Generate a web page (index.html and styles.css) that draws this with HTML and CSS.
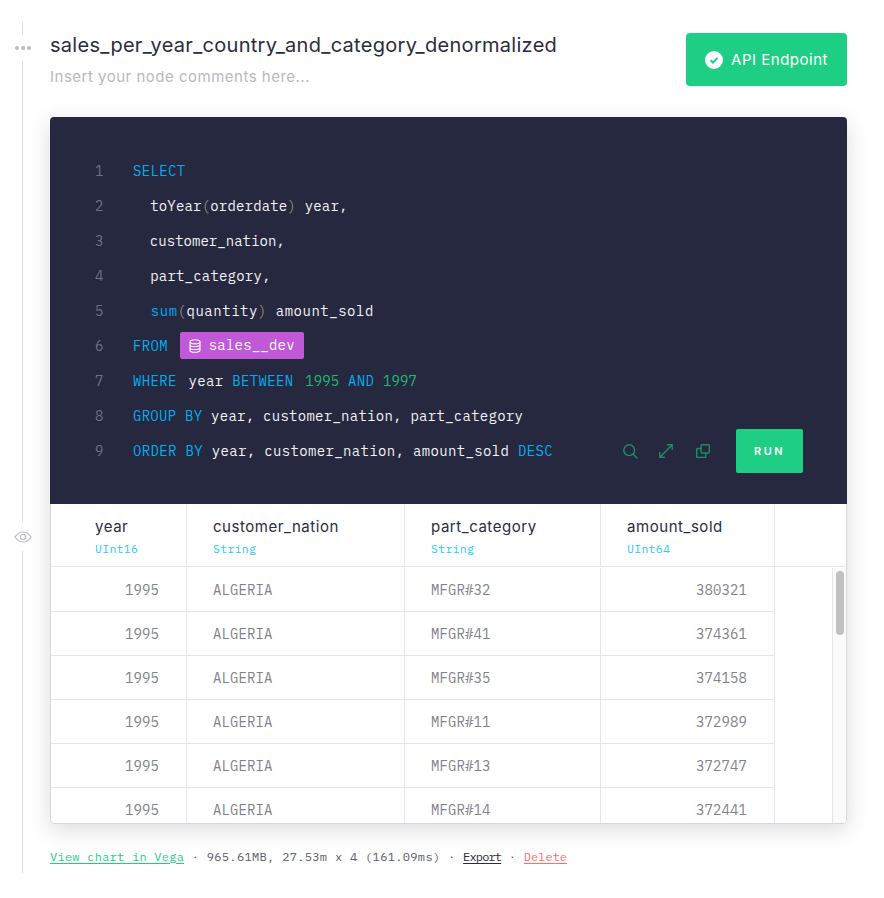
FILE: index.html
```html
<!DOCTYPE html>
<html lang="en">
<head>
<meta charset="utf-8">
<title>sales_per_year_country_and_category_denormalized</title>
<link rel="stylesheet" href="styles.css">
</head>
<body>
<div class="page">
  <div class="rail">
    <span class="seg seg-top"></span>
    <svg class="rail-dots" width="18" height="6" viewBox="0 0 18 6"><circle cx="3" cy="3" r="2"/><circle cx="9" cy="3" r="2"/><circle cx="15" cy="3" r="2"/></svg>
    <span class="seg seg-mid"></span>
    <svg class="rail-eye" width="18" height="12" viewBox="0 0 18 12"><path d="M1 6c2-3 5-5 8-5s6 2 8 5c-2 3-5 5-8 5S3 9 1 6z"/><circle cx="9" cy="6" r="2.6"/></svg>
    <span class="seg seg-bot"></span>
  </div>
  <main class="node">
    <header class="node-head">
      <div class="node-titles">
        <h1 class="node-title">sales_per_year_country_and_category_denormalized</h1>
        <p class="node-comment">Insert your node comments here...</p>
      </div>
      <button class="api-btn">
        <svg width="18" height="18" viewBox="0 0 18 18"><circle cx="9" cy="9" r="9" fill="#fff"/><path d="M5.5 9.2l2.4 2.3 4.6-4.6" fill="none" stroke="#1fce85" stroke-width="2"/></svg>
        <span>API Endpoint</span>
      </button>
    </header>

    <section class="card">
      <div class="editor">
        <div class="line"><span class="no">1</span><span class="kw">SELECT</span></div>
        <div class="line l2"><span class="no">2</span>  toYear<span class="par">(</span>orderdate<span class="par">)</span> year,</div>
        <div class="line l3"><span class="no">3</span>  customer_nation,</div>
        <div class="line l4"><span class="no">4</span>  part_category,</div>
        <div class="line l5"><span class="no">5</span>  <span class="kw">sum</span><span class="par">(</span>quantity<span class="par">)</span> amount_sold</div>
        <div class="line"><span class="no">6</span><span class="kw">FROM</span> <span class="ds"><svg width="12" height="14" viewBox="0 0 12 14" fill="none" stroke="#fff" stroke-width="1.1"><ellipse cx="6" cy="2.8" rx="5" ry="2.1"/><path d="M1 2.8v8.4c0 1.2 2.2 2.1 5 2.1s5-.9 5-2.1V2.8M1 5.6c0 1.2 2.2 2.1 5 2.1s5-.9 5-2.1M1 8.4c0 1.2 2.2 2.1 5 2.1s5-.9 5-2.1"/></svg>sales__dev</span></div>
        <div class="line"><span class="no">7</span><span class="kw gap">WHERE</span> year <span class="kw gap">BETWEEN</span> <span class="num">1995</span> <span class="kw">AND</span> <span class="num">1997</span></div>
        <div class="line l8"><span class="no">8</span><span class="kw">GROUP</span> <span class="kw">BY</span> year, customer_nation, part_category</div>
        <div class="line"><span class="no">9</span><span class="kw">ORDER</span> <span class="kw">BY</span> year, customer_nation, amount_sold <span class="kw">DESC</span></div>
        <div class="tools">
          <svg class="tool t-search" width="15" height="15" viewBox="0 0 15 15"><circle cx="6.2" cy="6.2" r="5.4"/><path d="M10 10l4.4 4.5"/></svg>
          <svg class="tool t-expand" width="14" height="14" viewBox="0 0 14 14"><path d="M.8 13.2L13.2.8M8 .8h5.2V6M.8 8v5.2H6"/></svg>
          <svg class="tool t-copy" width="14" height="14" viewBox="0 0 14 14"><rect x="5" y=".7" width="8.3" height="8.3" rx="1"/><path d="M5 4.5H1.7a1 1 0 0 0-1 1v7a1 1 0 0 0 1 1h7a1 1 0 0 0 1-1V9"/></svg>
          <button class="run">RUN</button>
        </div>
      </div>

      <div class="table">
        <div class="row head">
          <div class="cell"><span class="name">year</span><span class="type">UInt16</span></div>
          <div class="cell"><span class="name">customer_nation</span><span class="type">String</span></div>
          <div class="cell"><span class="name">part_category</span><span class="type">String</span></div>
          <div class="cell"><span class="name">amount_sold</span><span class="type">UInt64</span></div>
        </div>
        <div class="body">
          <div class="row"><div class="cell r">1995</div><div class="cell">ALGERIA</div><div class="cell">MFGR#32</div><div class="cell r">380321</div></div>
          <div class="row"><div class="cell r">1995</div><div class="cell">ALGERIA</div><div class="cell">MFGR#41</div><div class="cell r">374361</div></div>
          <div class="row"><div class="cell r">1995</div><div class="cell">ALGERIA</div><div class="cell">MFGR#35</div><div class="cell r">374158</div></div>
          <div class="row"><div class="cell r">1995</div><div class="cell">ALGERIA</div><div class="cell">MFGR#11</div><div class="cell r">372989</div></div>
          <div class="row"><div class="cell r">1995</div><div class="cell">ALGERIA</div><div class="cell">MFGR#13</div><div class="cell r">372747</div></div>
          <div class="row"><div class="cell r">1995</div><div class="cell">ALGERIA</div><div class="cell">MFGR#14</div><div class="cell r">372441</div></div>
          <div class="track"><span class="thumb"></span></div>
        </div>
      </div>
    </section>

    <p class="foot"><a class="vega" href="#">View chart in Vega</a> · 965.61MB, 27.53m x 4 (161.09ms) · <a class="export" href="#">Export</a> · <a class="delete" href="#">Delete</a></p>
  </main>
</div>
</body>
</html>
```

FILE: styles.css
```css
* { box-sizing: border-box; }
html, body { margin: 0; background: #fff; }
body { font-family: "Inter", "Liberation Sans", sans-serif; color: #2b2c41; }

.page { display: flex; height: 898px; overflow: hidden; padding-top: 22px; }

.rail { width: 50px; flex: none; display: flex; flex-direction: column; align-items: center; padding-right: 5px; height: 851px; }
.seg { width: 1px; background: #dddde0; display: block; }
.seg-top { height: 13px; }
.seg-mid { height: 461px; margin-top: 10px; }
.seg-bot { flex: 1; }
.rail-dots { fill: #bcbcc4; margin-top: 10px; flex: none; }
.rail-eye { fill: none; stroke: #bcbcc4; stroke-width: 1.2; margin: 9px 0 8px; flex: none; }

.node { width: 797px; flex: none; }

.node-head { display: flex; justify-content: space-between; align-items: flex-start; height: 95px; padding-top: 11px; }
.node-title { margin: 0; font-size: 20px; line-height: 24px; font-weight: 400; color: #2b2c41; letter-spacing: 0.29px; }
.node-comment { margin: 10px 0 0; font-size: 15px; line-height: 20px; color: #b9b9bf; letter-spacing: 0.5px; }

.api-btn { width: 161px; height: 53px; border: 0; border-radius: 4px; background: #1fce85; color: #fff; font: 15px/1 "Inter", "Liberation Sans", sans-serif; letter-spacing: 0.5px; display: flex; align-items: center; justify-content: center; gap: 8px; padding: 0; }

.card { border-radius: 4px; box-shadow: 0 6px 22px rgba(40, 40, 60, 0.16); overflow: hidden; height: 707px; }

.editor { position: relative; height: 387px; background: #262840; padding: 37px 0 0 45px; font: 14px/35px "IBM Plex Mono", "Liberation Mono", monospace; letter-spacing: 0.35px; color: #f2f2f5; }
.line { white-space: pre; height: 35px; }
.l2 { letter-spacing: 0.18px; }
.l3 { letter-spacing: 0.03px; }
.l4 { letter-spacing: 0.2px; }
.l5 { letter-spacing: 0.52px; }
.l8 { letter-spacing: 0.27px; }
.no { display: inline-block; width: 38px; color: #6f7080; letter-spacing: 0; }
.kw { color: #00aeef; }
.gap { margin-right: 3px; }
.par { color: #8d8d72; }
.num { color: #1fb873; letter-spacing: 0.1px; }
.ds { display: inline-flex; align-items: center; gap: 8px; height: 27px; padding: 0 9px; margin-left: 3px; border-radius: 2px; background: #c058d8; color: #fff; vertical-align: middle; margin-top: -3px; letter-spacing: 0.2px; }

.tools { position: absolute; right: 44px; top: 312px; display: flex; align-items: center; }
.tool { fill: none; stroke: #1f8a68; stroke-width: 1.4; }
.t-search { margin-right: 21px; }
.t-expand { margin-right: 23px; }
.t-copy { margin-right: 26px; }
.run { width: 67px; height: 44px; border: 0; border-radius: 2px; background: #1fce85; color: #fff; font: 600 11px/1 "Inter", "Liberation Sans", sans-serif; letter-spacing: 2.4px; padding: 0; }

.table { height: 320px; border: 1px solid #d8d8db; border-top: 0; border-radius: 0 0 4px 4px; overflow: hidden; background: #fff; font: 14px/20px "IBM Plex Mono", "Liberation Mono", monospace; color: #82828e; letter-spacing: 0.1px; }
.row { display: grid; grid-template-columns: 136px 218px 196px 174px; height: 44px; border-bottom: 1px solid #e6e6e8; width: 724px; }
.row.head { height: 63px; border-bottom: 1px solid #e6e6e8; width: 100%; grid-template-columns: 136px 218px 196px 174px 1fr; }
.cell { border-right: 1px solid #e6e6e8; padding: 0 26px; display: flex; align-items: center; white-space: nowrap; }
.cell.r { justify-content: flex-end; padding-right: 27px; }
.head .cell { flex-direction: column; align-items: flex-start; justify-content: flex-start; padding: 12px 26px 0 26px; }
.head .cell:first-child { padding-left: 44px; }
.name { font: 15px/22px "Inter", "Liberation Sans", sans-serif; color: #2b2c41; letter-spacing: 0.55px; }
.type { font: 11.5px/16px "IBM Plex Mono", "Liberation Mono", monospace; color: #2ec8fa; margin-top: 3px; letter-spacing: 0.3px; }

.body { position: relative; height: 257px; padding-top: 1px; overflow: hidden; }
.track { position: absolute; right: 0; top: 1px; bottom: 0; width: 14px; border-left: 1px solid #e6e6e8; background: #fafafa; }
.thumb { position: absolute; left: 3px; top: 3px; width: 8px; height: 64px; border-radius: 4px; background: #c1c1c1; }

.foot { margin: 25px 0 0; font: 12px/16px "IBM Plex Mono", "Liberation Mono", monospace; color: #5a5a68; letter-spacing: 0.34px; }
.foot a { text-underline-offset: 2px; }
.vega { color: #1fce85; letter-spacing: 0.25px; }
.export { color: #2b2c41; letter-spacing: -0.85px; }
.delete { color: #ff6b6b; letter-spacing: 0; }
```
